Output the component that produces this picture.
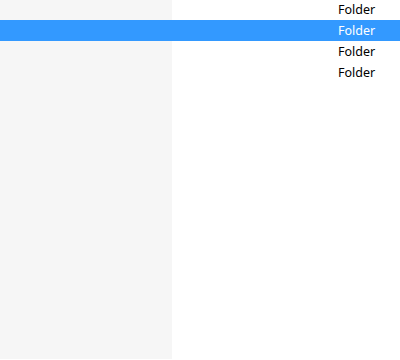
const rows = ["Folder", "Folder", "Folder", "Folder"];

export default function App() {
  return (
    <div className="h-[360px] w-[400px] bg-[linear-gradient(to_right,#f6f6f6_172px,#ffffff_172px)] font-['Noto_Sans',sans-serif] text-[12.5px]">
      <ul className="-mt-px">
        {rows.map((name, i) => (
          <li
            key={i}
            className={
              "h-[21px] pl-[338px] leading-[21px] " +
              (i === 1 ? "bg-[#3399ff] text-white" : "text-black")
            }
          >
            {name}
          </li>
        ))}
      </ul>
    </div>
  );
}
